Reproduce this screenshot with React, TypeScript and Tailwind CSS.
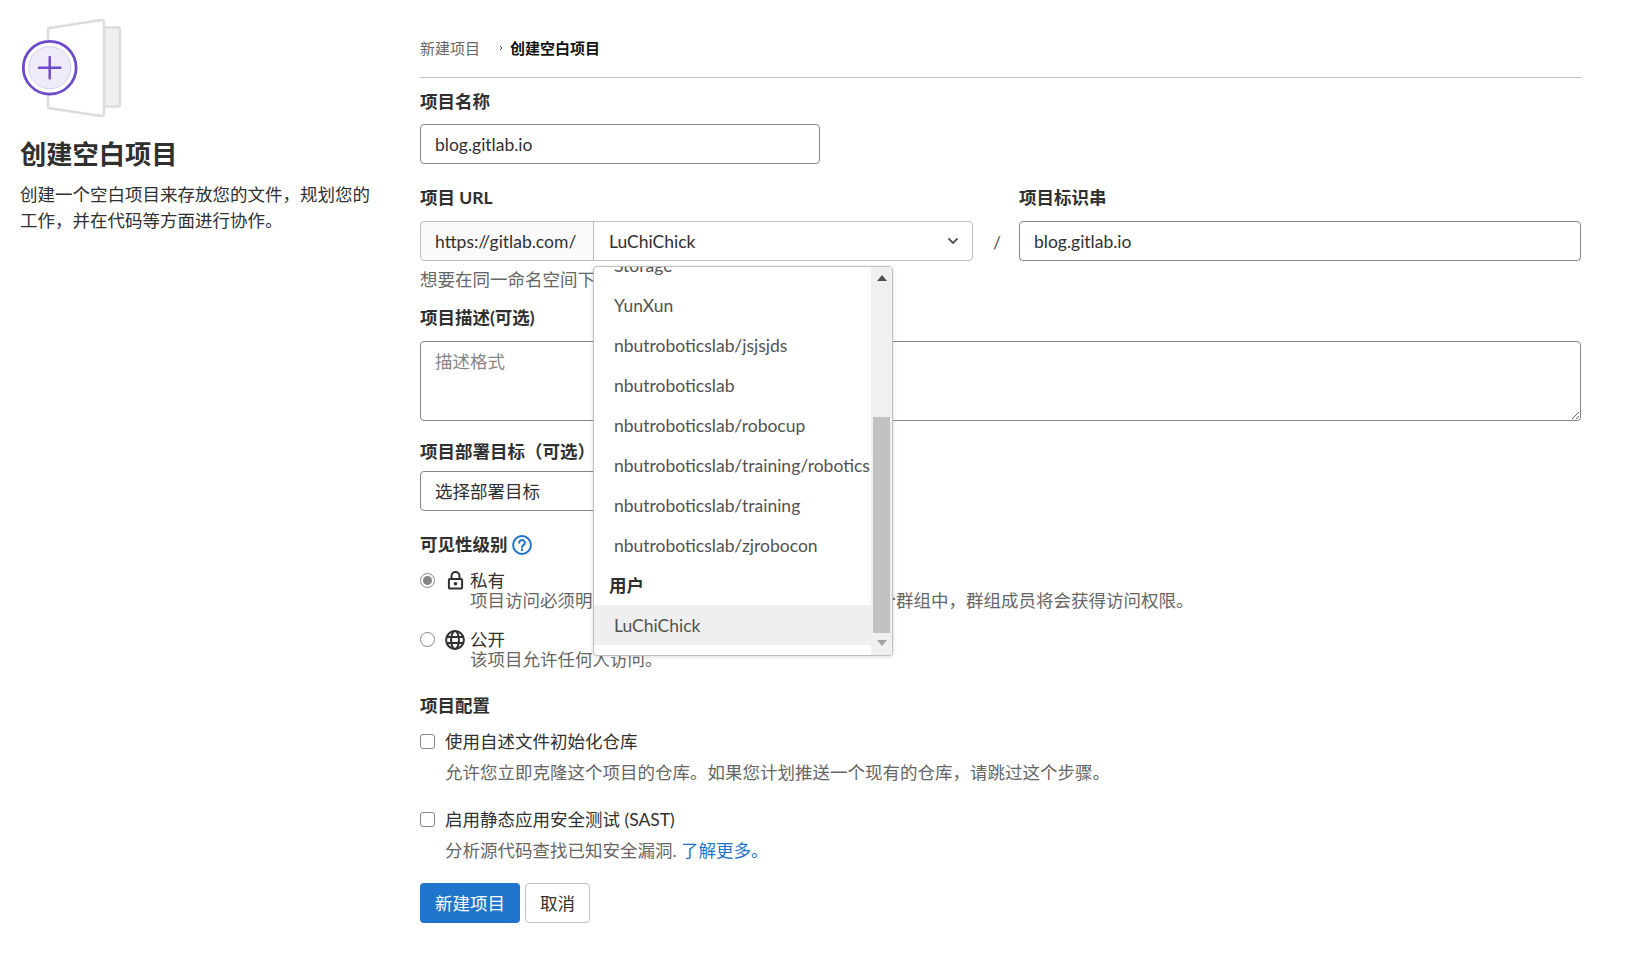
import React from "react";

const font = "font-['Lato','Noto_Sans_CJK_SC',sans-serif]";

function Label({ children, className = "" }: { children: React.ReactNode; className?: string }) {
  return <div className={`h-[26px] leading-[26px] text-[17.5px] font-bold text-[#303030] ${className}`}>{children}</div>;
}

function ProjectArt() {
  return (
    <svg width="104" height="104" viewBox="0 0 104 104" fill="none" className="block">
      <rect x="81" y="9.5" width="18" height="79" rx="2" fill="#f0f0f0" stroke="#dcdcdc" strokeWidth="2.4" />
      <path d="M27 10.2 L80 2 Q83 1.6 83 4.5 V95.5 Q83 98.4 80 98 L29 90.2 Q27 90 27 88 Z" fill="#fff" stroke="#dcdcdc" strokeWidth="2.6" strokeLinejoin="round" />
      <circle cx="28.7" cy="49.7" r="26.4" fill="#fff" stroke="#6e49cb" strokeWidth="2.8" />
      <circle cx="28.7" cy="49.7" r="21" fill="#efebf9" stroke="#d6cdf2" strokeWidth="1" />
      <path d="M28.7 39 V60.4 M18 49.7 H39.4" stroke="#6e49cb" strokeWidth="2.4" strokeLinecap="round" />
    </svg>
  );
}

function Radio({ checked }: { checked?: boolean }) {
  return (
    <span className="w-[15px] h-[15px] rounded-full border border-[#868686] bg-white flex items-center justify-center shrink-0">
      {checked && <span className="w-[9px] h-[9px] rounded-full bg-[#868686]" />}
    </span>
  );
}

function Check() {
  return <span className="block w-[15px] h-[15px] mb-[1px] rounded-[3px] border border-[#868686] bg-white shrink-0" />;
}

function LockIcon() {
  return (
    <svg width="17" height="19" viewBox="0 0 17 19" fill="none" className="shrink-0">
      <path d="M4.5 8V5a4 4 0 0 1 8 0v3" stroke="#303030" strokeWidth="2" />
      <rect x="1.9" y="8" width="13.2" height="9.6" rx="1.2" stroke="#303030" strokeWidth="2" />
      <circle cx="8.5" cy="12.8" r="1.8" fill="#303030" />
    </svg>
  );
}

function GlobeIcon() {
  return (
    <svg width="20" height="20" viewBox="0 0 20 20" fill="none" className="shrink-0">
      <circle cx="10" cy="10" r="8.9" stroke="#303030" strokeWidth="2" />
      <ellipse cx="10" cy="10" rx="3.9" ry="8.9" stroke="#303030" strokeWidth="2" />
      <path d="M1.5 7H18.5M1.5 13H18.5" stroke="#303030" strokeWidth="2" />
    </svg>
  );
}

function HelpIcon() {
  return (
    <svg width="20" height="20" viewBox="0 0 20 20" fill="none" className="shrink-0">
      <circle cx="10" cy="10" r="8.9" stroke="#1f75cb" strokeWidth="2" />
      <path d="M7.2 7.8a2.8 2.8 0 1 1 4.4 2.3c-1 .7-1.6 1.1-1.6 2.3" stroke="#1f75cb" strokeWidth="2" strokeLinecap="round" />
      <circle cx="10" cy="15" r="1.2" fill="#1f75cb" />
    </svg>
  );
}

function Dropdown() {
  const items = [
    "YunXun",
    "nbutroboticslab/jsjsjds",
    "nbutroboticslab",
    "nbutroboticslab/robocup",
    "nbutroboticslab/training/robotics",
    "nbutroboticslab/training",
    "nbutroboticslab/zjrobocon",
  ];
  return (
    <div className="absolute left-[173px] top-[266px] z-10 w-[300px] h-[390px] bg-white border border-[#bfbfbf] rounded-[4px] shadow-[0_1px_4px_rgba(0,0,0,0.15)] flex overflow-hidden">
      <div className="w-[277px] overflow-hidden text-[17.5px] text-[#525252]">
        <div className="h-[40px] -mt-[21px] pl-[20px] leading-[40px]">Storage</div>
        {items.map((t) => (
          <div key={t} className="h-[40px] pl-[20px] leading-[39px] whitespace-nowrap">{t}</div>
        ))}
        <div className="h-[39px] pl-[15px] leading-[39px] font-bold text-[#303030]">用户</div>
        <div className="h-[40px] pl-[20px] leading-[41px] bg-[#efefef]">LuChiChick</div>
      </div>
      <div className="w-[21px] bg-[#f0f0f0] flex flex-col items-center">
        <svg width="10" height="6" viewBox="0 0 10 6" className="mt-[8px] shrink-0"><path d="M5 0 L10 6 H0 Z" fill="#505050" /></svg>
        <div className="w-[17px] h-[216px] mt-[136px] bg-[#c1c1c1] shrink-0" />
        <svg width="10" height="6" viewBox="0 0 10 6" className="mt-[7px] shrink-0"><path d="M0 0 H10 L5 6 Z" fill="#a3a3a3" /></svg>
      </div>
    </div>
  );
}

export default function App() {
  return (
    <div className={`${font} flex w-[1626px] h-[974px] bg-white text-[#303030] overflow-hidden`}>
      <aside className="w-[420px] shrink-0 pl-[20px] pt-[18px]">
        <div className="pl-[1px]"><ProjectArt /></div>
        <h1 className="mt-[14px] h-[36px] leading-[36px] text-[26.25px] font-bold text-[#303030]">创建空白项目</h1>
        <p className="mt-[10px] w-[360px] text-[17.5px] leading-[26px] text-[#303030]">
          创建一个空白项目来存放您的文件，规划您的工作，并在代码等方面进行协作。
        </p>
      </aside>

      <main className="relative w-[1161px] shrink-0">
        <nav className="pt-[35px] pb-[15px] h-[78px] border-b border-[#bfbfbf] flex items-start text-[15px] leading-[26px]">
          <span className="text-[#666666]">新建项目</span>
          <svg width="6" height="8" viewBox="0 0 6 8" fill="none" className="ml-[18px] mr-[6px] mt-[9px]"><path d="M2 2 L4 4 L2 6" stroke="#444" strokeWidth="1" /></svg>
          <span className="font-bold text-[#111111]">创建空白项目</span>
        </nav>

        <Label className="mt-[11px]">项目名称</Label>
        <input readOnly value="blog.gitlab.io" className="mt-[9px] block w-[400px] h-[40px] pl-[14px] pr-[15px] border border-[#868686] rounded-[4px] text-[17.5px] text-[#303030] outline-none" />

        <div className="mt-[21px] flex">
          <div className="w-[553px] shrink-0">
            <Label>项目 URL</Label>
            <div className="mt-[10px] flex h-[40px] text-[17.5px]">
              <div className="w-[174px] shrink-0 bg-[#fafafa] border border-[#bfbfbf] rounded-l-[4px] pl-[14px] leading-[39px] whitespace-nowrap">https://gitlab.com/</div>
              <div className="w-[380px] shrink-0 -ml-px border border-[#bfbfbf] rounded-r-[4px] pl-[15px] pr-[13px] leading-[39px] flex items-center justify-between">
                <span>LuChiChick</span>
                <svg width="12" height="8" viewBox="0 0 12 8" fill="none"><path d="M1.5 1.5 L6 6 L10.5 1.5" stroke="#525252" strokeWidth="1.8" /></svg>
              </div>
            </div>
          </div>
          <div className="w-[46px] shrink-0 pt-[40px] pl-[20px] text-[17.5px] leading-[36px] text-[#525252]">/</div>
          <div className="flex-1">
            <Label>项目标识串</Label>
            <input readOnly value="blog.gitlab.io" className="mt-[10px] block w-full h-[40px] pl-[14px] pr-[15px] border border-[#868686] rounded-[4px] text-[17.5px] text-[#303030] outline-none" />
          </div>
        </div>

        <p className="mt-[6px] h-[26px] leading-[26px] text-[17.5px] text-[#666666]">想要在同一命名空间下存放多个依赖项目？</p>

        <Label className="mt-[12px]">项目描述(可选)</Label>
        <textarea readOnly placeholder="描述格式" className="mt-[10px] block w-full h-[80px] pl-[14px] pr-[15px] pt-[7px] pb-[5px] border border-[#868686] rounded-[4px] text-[17.5px] leading-[26px] outline-none resize-y placeholder:text-[#868686]" />

        <Label className="mt-[18px]">项目部署目标（可选）</Label>
        <div className="mt-[6px] w-[400px] h-[40px] border border-[#868686] rounded-[4px] pl-[14px] pr-[15px] leading-[40px] text-[17.5px]">选择部署目标</div>

        <Label className="mt-[21px] flex items-center gap-[4px]">可见性级别 <HelpIcon /></Label>

        <div className="mt-[12px] flex items-center h-[21px] text-[17.5px] leading-[21px]">
          <Radio checked />
          <span className="ml-[12px] w-[23px]"><LockIcon /></span>
          <span>私有</span>
        </div>
        <p className="ml-[50px] h-[21px] leading-[20px] text-[17.5px] text-[#666666]">
          项目访问必须明确授予每个用户。<span className="ml-[6px]">如果此项目是在一个群组中，群组成员将会获得访问权限。</span>
        </p>

        <div className="mt-[17px] flex items-center h-[21px] text-[17.5px] leading-[21px]">
          <Radio />
          <span className="ml-[10px] w-[25px]"><GlobeIcon /></span>
          <span>公开</span>
        </div>
        <p className="ml-[50px] h-[21px] leading-[20px] text-[17.5px] text-[#666666]">该项目允许任何人访问。</p>

        <Label className="mt-[22px]">项目配置</Label>

        <div className="mt-[10px] flex items-center h-[26px] text-[17.5px]">
          <Check />
          <span className="ml-[10px]">使用自述文件初始化仓库</span>
        </div>
        <p className="mt-[5px] ml-[25px] h-[26px] leading-[26px] text-[17.5px] text-[#666666]">允许您立即克隆这个项目的仓库。如果您计划推送一个现有的仓库，请跳过这个步骤。</p>

        <div className="mt-[21px] flex items-center h-[26px] text-[17.5px]">
          <Check />
          <span className="ml-[10px]">启用静态应用安全测试 (SAST)</span>
        </div>
        <p className="mt-[5px] ml-[25px] h-[26px] leading-[26px] text-[17.5px] text-[#666666]">
          分析源代码查找已知安全漏洞. <span className="text-[#1f75cb]">了解更多。</span>
        </p>

        <div className="mt-[19px] flex gap-[5px] text-[17.5px]">
          <button className="w-[100px] h-[40px] pt-[2px] rounded-[4px] bg-[#1f75cb] text-white">新建项目</button>
          <button className="w-[65px] h-[40px] pt-[2px] rounded-[4px] border border-[#bfbfbf] bg-white text-[#303030]">取消</button>
        </div>

        <Dropdown />
      </main>
    </div>
  );
}
